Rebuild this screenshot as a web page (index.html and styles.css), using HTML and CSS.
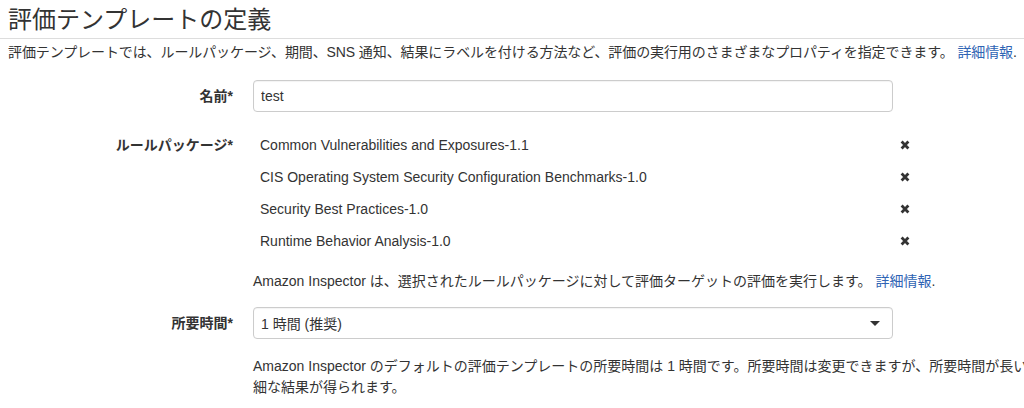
FILE: index.html
```html
<!DOCTYPE html>
<html lang="ja">
<head>
    <meta charset="UTF-8">
    <meta name="viewport" content="width=device-width, initial-scale=1.0">
    <title>評価テンプレートの定義</title>
    <link rel="stylesheet" href="styles.css">
</head>
<body>

    <h1 class="title">評価テンプレートの定義</h1>
    <p class="intro">評価テンプレートでは、ルールパッケージ、期間、SNS 通知、結果にラベルを付ける方法など、評価の実行用のさまざまなプロパティを指定できます。 <a href="#">詳細情報</a>.</p>

    <form class="form">
        <!-- Name -->
        <div class="row">
            <label class="label" for="name">名前*</label>
            <div class="field">
                <input class="input" type="text" id="name" value="test">
            </div>
        </div>

        <!-- Rule packages -->
        <div class="row row-packages">
            <label class="label">ルールパッケージ*</label>
            <div class="field">
                <ul class="packages">
                    <li><span>Common Vulnerabilities and Exposures-1.1</span><svg class="remove" viewBox="0 0 10 10"><path d="M1.6 1.6L8.4 8.4M8.4 1.6L1.6 8.4"/></svg></li>
                    <li><span>CIS Operating System Security Configuration Benchmarks-1.0</span><svg class="remove" viewBox="0 0 10 10"><path d="M1.6 1.6L8.4 8.4M8.4 1.6L1.6 8.4"/></svg></li>
                    <li><span>Security Best Practices-1.0</span><svg class="remove" viewBox="0 0 10 10"><path d="M1.6 1.6L8.4 8.4M8.4 1.6L1.6 8.4"/></svg></li>
                    <li><span>Runtime Behavior Analysis-1.0</span><svg class="remove" viewBox="0 0 10 10"><path d="M1.6 1.6L8.4 8.4M8.4 1.6L1.6 8.4"/></svg></li>
                </ul>
                <p class="help">Amazon Inspector は、選択されたルールパッケージに対して評価ターゲットの評価を実行します。 <a href="#">詳細情報</a>.</p>
            </div>
        </div>

        <!-- Duration -->
        <div class="row row-duration">
            <label class="label" for="duration">所要時間*</label>
            <div class="field">
                <div class="select" id="duration">
                    <span>1 時間 (推奨)</span>
                    <span class="caret"></span>
                </div>
                <p class="help help-long">Amazon Inspector のデフォルトの評価テンプレートの所要時間は 1 時間です。所要時間は変更できますが、所要時間が長いほど詳<br>細な結果が得られます。</p>
            </div>
        </div>
    </form>

</body>
</html>
```

FILE: styles.css
```css
/* General Styles */
html, body {
    margin: 0;
    overflow: hidden;
}

body {
    font-family: 'Liberation Sans', 'Noto Sans CJK JP', sans-serif;
    font-size: 14px;
    color: #333;
    background-color: #fff;
}

a {
    color: #2f64b4;
    text-decoration: none;
}

.title {
    margin: 0;
    padding: 5px 8px 3px;
    font-size: 24px;
    font-weight: normal;
    line-height: 30px;
    color: #333;
    border-bottom: 1px solid #ddd;
}

.intro {
    margin: 4px 0 0;
    padding: 0 8px;
    line-height: 18px;
    letter-spacing: -0.1px;
    white-space: nowrap;
}

/* Form Layout */
.form {
    margin-top: 19px;
}

.row {
    display: grid;
    grid-template-columns: 233px 800px;
    column-gap: 20px;
}

.row-packages {
    margin-top: 17px;
}

.row-duration {
    margin-top: 16px;
}

.label {
    font-weight: bold;
    text-align: right;
    line-height: 32px;
    color: #333;
}

.input,
.select {
    box-sizing: border-box;
    width: 640px;
    height: 32px;
    padding: 0 7px;
    border: 1px solid #ccc;
    border-radius: 4px;
    box-shadow: inset 0 1px 1px rgba(0, 0, 0, 0.05);
    font-family: inherit;
    font-size: 14px;
    color: #333;
    background-color: #fff;
}

.select {
    display: flex;
    justify-content: space-between;
    align-items: center;
}

.caret {
    width: 0;
    height: 0;
    margin-right: 5px;
    border-left: 5px solid transparent;
    border-right: 5px solid transparent;
    border-top: 5px solid #333;
}

/* Rule packages */
.packages {
    list-style: none;
    margin: 0;
    padding: 0;
    width: 662px;
}

.packages li {
    display: flex;
    justify-content: space-between;
    align-items: center;
    height: 32px;
    padding: 0 5px 0 7px;
}

.remove {
    width: 10px;
    height: 10px;
    stroke: #333;
    stroke-width: 2.8;
    fill: none;
}

.help {
    margin: 14px 0 0;
    line-height: 20px;
    white-space: nowrap;
}

.help-long {
    margin-top: 17px;
    line-height: 21px;
}
```
